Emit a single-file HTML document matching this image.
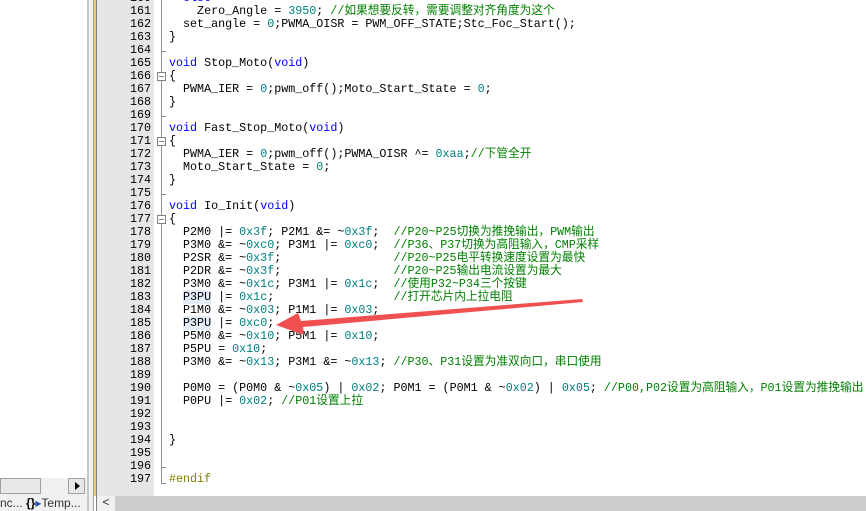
<!DOCTYPE html>
<html><head><meta charset="utf-8"><style>
body{margin:0;width:866px;height:511px;overflow:hidden;background:#fff;position:relative;font-family:"Liberation Mono","Noto Sans CJK SC",monospace;}
.l{position:absolute;left:169px;height:13px;line-height:13px;font-size:11.7px;white-space:pre;color:#000;}
.n{position:absolute;left:97px;width:54px;text-align:right;height:13px;line-height:13px;font-size:11.7px;color:#000;}
.k{color:#0000ff}.h{color:#008080}.c{color:#008000}.p{color:#808000}.s{background:#e3ecf8}
</style></head><body>
<div style="position:absolute;left:0;top:0;width:87px;height:478px;background:#fff"></div>
<div style="position:absolute;left:87px;top:0;width:2px;height:511px;background:#c8c8c8"></div>
<div style="position:absolute;left:89px;top:0;width:4px;height:511px;background:#f0f0f0"></div>
<div style="position:absolute;left:93px;top:0;width:1px;height:511px;background:#a0a0a0"></div>
<div style="position:absolute;left:94px;top:0;width:2px;height:496px;background:#f5c85a"></div>
<div style="position:absolute;left:96px;top:0;width:1px;height:511px;background:#808080"></div>
<div style="position:absolute;left:97px;top:0;width:57px;height:496px;background:#e6e6e6"></div>
<div style="position:absolute;left:161px;top:0;width:1px;height:484px;background:#909090"></div>
<div style="position:absolute;left:0;top:478px;width:87px;height:17px;background:#f0f0f0"></div>
<div style="position:absolute;left:0;top:478px;width:41px;height:16px;background:#e8e8e8;border:1px solid #a0a0a0;box-sizing:border-box"></div>
<div style="position:absolute;left:68px;top:478px;width:17px;height:16px;background:#e8e8e8;border:1px solid #a0a0a0;box-sizing:border-box"></div>
<div style="position:absolute;left:75px;top:482px;width:0;height:0;border-left:5px solid #000;border-top:4px solid transparent;border-bottom:4px solid transparent"></div>
<div style="position:absolute;left:0;top:495px;width:87px;height:16px;background:#f0f0f0;font-family:'Liberation Sans',sans-serif;font-size:12px;line-height:16px;color:#333;white-space:nowrap;overflow:hidden">nc... <b style="color:#000">{}</b><span style="color:#2050c0">▸</span>Temp...</div>
<div style="position:absolute;left:97px;top:496px;width:769px;height:15px;background:#cdcdcd"></div>
<div style="position:absolute;left:97px;top:496px;width:18px;height:15px;background:#f0f0f0;font-size:12px;line-height:15px;text-align:center;color:#333">&lt;</div>
<div style="position:absolute;left:157px;top:72px;width:7px;height:7px;border:1px solid #808080;background:#fff"></div>
<div style="position:absolute;left:159px;top:76px;width:5px;height:1px;background:#808080"></div>
<div style="position:absolute;left:157px;top:137px;width:7px;height:7px;border:1px solid #808080;background:#fff"></div>
<div style="position:absolute;left:159px;top:141px;width:5px;height:1px;background:#808080"></div>
<div style="position:absolute;left:157px;top:215px;width:7px;height:7px;border:1px solid #808080;background:#fff"></div>
<div style="position:absolute;left:159px;top:219px;width:5px;height:1px;background:#808080"></div>
<div style="position:absolute;left:162px;top:51px;width:4px;height:1px;background:#909090"></div>
<div style="position:absolute;left:162px;top:116px;width:4px;height:1px;background:#909090"></div>
<div style="position:absolute;left:162px;top:194px;width:4px;height:1px;background:#909090"></div>
<div style="position:absolute;left:162px;top:467px;width:4px;height:1px;background:#909090"></div>
<div style="position:absolute;left:161px;top:483px;width:5px;height:1px;background:#909090"></div>

<div class="n" style="top:-8px">160</div><div class="l" style="top:-8px">  <span class="k">else</span></div>
<div class="n" style="top:5px">161</div><div class="l" style="top:5px">    Zero_Angle = <span class="h">3950</span>; <span class="c">//如果想要反转，需要调整对齐角度为这个</span></div>
<div class="n" style="top:18px">162</div><div class="l" style="top:18px">  set_angle = <span class="h">0</span>;PWMA_OISR = PWM_OFF_STATE;Stc_Foc_Start();</div>
<div class="n" style="top:31px">163</div><div class="l" style="top:31px">}</div>
<div class="n" style="top:44px">164</div>
<div class="n" style="top:57px">165</div><div class="l" style="top:57px"><span class="k">void</span> Stop_Moto(<span class="k">void</span>)</div>
<div class="n" style="top:70px">166</div><div class="l" style="top:70px">{</div>
<div class="n" style="top:83px">167</div><div class="l" style="top:83px">  PWMA_IER = <span class="h">0</span>;pwm_off();Moto_Start_State = <span class="h">0</span>;</div>
<div class="n" style="top:96px">168</div><div class="l" style="top:96px">}</div>
<div class="n" style="top:109px">169</div>
<div class="n" style="top:122px">170</div><div class="l" style="top:122px"><span class="k">void</span> Fast_Stop_Moto(<span class="k">void</span>)</div>
<div class="n" style="top:135px">171</div><div class="l" style="top:135px">{</div>
<div class="n" style="top:148px">172</div><div class="l" style="top:148px">  PWMA_IER = <span class="h">0</span>;pwm_off();PWMA_OISR ^= <span class="h">0xaa</span>;<span class="c">//下管全开</span></div>
<div class="n" style="top:161px">173</div><div class="l" style="top:161px">  Moto_Start_State = <span class="h">0</span>;</div>
<div class="n" style="top:174px">174</div><div class="l" style="top:174px">}</div>
<div class="n" style="top:187px">175</div>
<div class="n" style="top:200px">176</div><div class="l" style="top:200px"><span class="k">void</span> Io_Init(<span class="k">void</span>)</div>
<div class="n" style="top:213px">177</div><div class="l" style="top:213px">{</div>
<div class="n" style="top:226px">178</div><div class="l" style="top:226px">  P2M0 |= <span class="h">0x3f</span>; P2M1 &amp;= ~<span class="h">0x3f</span>;  <span class="c">//P20~P25切换为推挽输出，PWM输出</span></div>
<div class="n" style="top:239px">179</div><div class="l" style="top:239px">  P3M0 &amp;= ~<span class="h">0xc0</span>; P3M1 |= <span class="h">0xc0</span>;  <span class="c">//P36、P37切换为高阻输入，CMP采样</span></div>
<div class="n" style="top:252px">180</div><div class="l" style="top:252px">  P2SR &amp;= ~<span class="h">0x3f</span>;                <span class="c">//P20~P25电平转换速度设置为最快</span></div>
<div class="n" style="top:265px">181</div><div class="l" style="top:265px">  P2DR &amp;= ~<span class="h">0x3f</span>;                <span class="c">//P20~P25输出电流设置为最大</span></div>
<div class="n" style="top:278px">182</div><div class="l" style="top:278px">  P3M0 &amp;= ~<span class="h">0x1c</span>; P3M1 |= <span class="h">0x1c</span>;  <span class="c">//使用P32~P34三个按键</span></div>
<div class="n" style="top:291px">183</div><div class="l" style="top:291px">  <span class="s">P3PU</span> |= <span class="h">0x1c</span>;                 <span class="c">//打开芯片内上拉电阻</span></div>
<div class="n" style="top:304px">184</div><div class="l" style="top:304px">  P1M0 &amp;= ~<span class="h">0x03</span>; P1M1 |= <span class="h">0x03</span>;</div>
<div class="n" style="top:317px">185</div><div class="l" style="top:317px">  <span class="s">P3PU</span> |= <span class="h">0xc0</span>;</div>
<div class="n" style="top:330px">186</div><div class="l" style="top:330px">  P5M0 &amp;= ~<span class="h">0x10</span>; P5M1 |= <span class="h">0x10</span>;</div>
<div class="n" style="top:343px">187</div><div class="l" style="top:343px">  P5PU = <span class="h">0x10</span>;</div>
<div class="n" style="top:356px">188</div><div class="l" style="top:356px">  P3M0 &amp;= ~<span class="h">0x13</span>; P3M1 &amp;= ~<span class="h">0x13</span>; <span class="c">//P30、P31设置为准双向口，串口使用</span></div>
<div class="n" style="top:369px">189</div>
<div class="n" style="top:382px">190</div><div class="l" style="top:382px">  P0M0 = (P0M0 &amp; ~<span class="h">0x05</span>) | <span class="h">0x02</span>; P0M1 = (P0M1 &amp; ~<span class="h">0x02</span>) | <span class="h">0x05</span>; <span class="c">//P00,P02设置为高阻输入，P01设置为推挽输出</span></div>
<div class="n" style="top:395px">191</div><div class="l" style="top:395px">  P0PU |= <span class="h">0x02</span>; <span class="c">//P01设置上拉</span></div>
<div class="n" style="top:408px">192</div>
<div class="n" style="top:421px">193</div>
<div class="n" style="top:434px">194</div><div class="l" style="top:434px">}</div>
<div class="n" style="top:447px">195</div>
<div class="n" style="top:460px">196</div>
<div class="n" style="top:473px">197</div><div class="l" style="top:473px"><span class="p">#endif</span></div>

<svg style="position:absolute;left:0;top:0" width="866" height="511">
<polygon points="582,299 583,302 303,327 304,335 276,325 298,313 301,321" fill="#f05050"/>
</svg>
</body></html>
